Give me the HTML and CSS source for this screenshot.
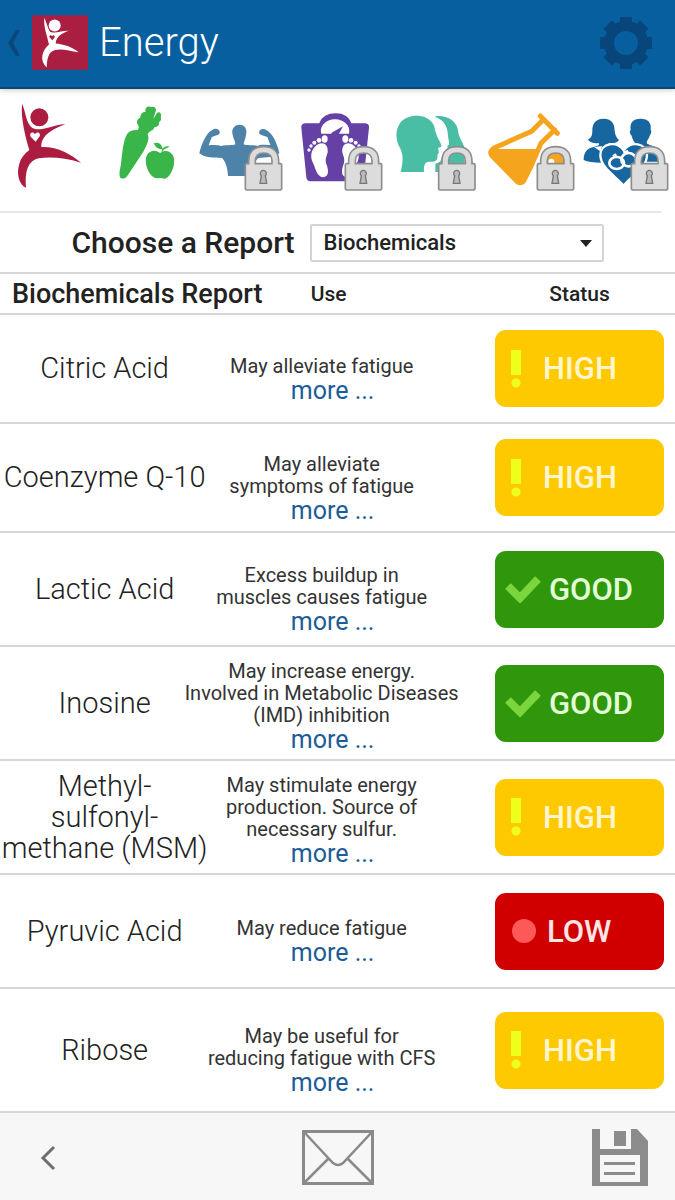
FILE: index.html
```html
<!DOCTYPE html>
<html lang="en">
<head>
	<meta charset="UTF-8">
	<meta name="viewport" content="width=device-width, initial-scale=1">
	<title>Energy</title>
	<link rel="stylesheet" href="styles.css">
</head>
<body>
	<header class="topbar">
		<a class="back" href="#" aria-label="Back">
			<svg width="14" height="28" viewBox="0 0 14 28"><path d="M9 1h4L6 14l7 13H9L1 14z" fill="#0a467a"/></svg>
		</a>
		<svg class="logo" width="56" height="55" viewBox="96 46 168 164">
			<path fill="#aa1e41" d="M96 46h168v164H96z"/>
			<circle cx="164" cy="77" r="18" fill="#fff"/>
			<path fill="#fff" d="M133 54C139 66 143 84 149 94C161 104 181 93 207 93C187 99 168 111 167 131C191 133 216 141 236 157C207 153 185 145 163 151C145 157 141 177 140 203C118 183 125 153 147 134C141 105 130 82 133 54z"/>
			<path fill="#aa1e41" d="M157 121l-8-8c-4-7 5-9 7-4c3-5 10-3 8 3z"/>
		</svg>
		<h1>Energy</h1>
		<button class="settings" type="button" aria-label="Settings">
			<svg width="54" height="54" viewBox="-27 -27 54 54">
				<g fill="#07457a">
					<path id="tooth" d="M-6-17V-25q0-1 1-1H5q1 0 1 1V-17z"/>
					<use href="#tooth" transform="rotate(45)"/>
					<use href="#tooth" transform="rotate(90)"/>
					<use href="#tooth" transform="rotate(135)"/>
					<use href="#tooth" transform="rotate(180)"/>
					<use href="#tooth" transform="rotate(225)"/>
					<use href="#tooth" transform="rotate(270)"/>
					<use href="#tooth" transform="rotate(315)"/>
				</g>
				<circle r="17" fill="none" stroke="#07457a" stroke-width="10"/>
			</svg>
		</button>
	</header>

	<svg class="defs" width="0" height="0">
		<defs>
			<g id="lock">
				<path d="M11 54V46C11 16 30 3 56 3s45 13 45 43v8h5q4 0 4 4v70q0 5-5 5H6q-5 0-5-5V58q0-4 4-4zM31 54h50V46C81 29 71 22 56 22S31 29 31 46z" fill="#dcdcdc" fill-rule="evenodd" stroke="#8d8d8d" stroke-width="5" stroke-linejoin="round"/>
				<path d="M49 90a9 9 0 1 1 12 0l4 23H45z" fill="#bbb" stroke="#777" stroke-width="4"/>
			</g>
		</defs>
	</svg>

	<nav class="tabs">
		<a href="#" aria-label="Wellness">
			<svg viewBox="0 15 288 288">
				<circle cx="118" cy="67" r="27" fill="#ab1c40"/>
				<path fill="#ab1c40" d="M66 26C76 45 78 86 97 99C120 111 151 92 196 87C160 102 123 119 124 156C172 154 213 178 243 203C195 188 151 185 116 190C84 198 74 227 78 278C56 268 49 235 58 206C65 184 77 174 88 165C76 126 62 70 66 26z"/>
				<path fill="#fff" d="M107 140L92 125C86 112 101 108 105 118C110 107 124 113 119 124z"/>
			</svg>
		</a>
		<a href="#" aria-label="Nutrition">
			<svg viewBox="291 15 288 288" fill="#39b54a">
				<path d="M382 116C396 98 433 104 443 118C450 133 440 152 430 170L382 243C376 251 366 253 361 248C356 240 360 222 363 208C367 174 369 136 382 116z"/>
				<path d="M412 108C418 99 417 94 413 88C408 80 413 70 421 68C421 52 432 50 437 51C432 36 447 31 454 36C464 32 472 42 466 52L460 72L469 57C475 45 488 56 482 67C486 73 481 79 477 82C479 90 473 96 463 97C459 111 448 104 442 120z"/>
				<path d="M480 174C498 160 519 171 522 191C526 214 511 243 498 250C490 253 485 248 479 249C466 253 457 245 451 238C435 216 431 181 450 171C461 164 472 168 480 174z"/>
				<path d="M461 145C475 139 486 148 488 163C475 164 467 157 461 145zM484 170C487 158 495 151 508 155C501 161 491 159 488 170z"/>
			</svg>
		</a>
		<a href="#" aria-label="Fitness">
			<svg viewBox="9 15 288 288">
				<path fill="#4d83a8" d="M148 89C165 89 172 102 168 119C167 132 161 139 161 148C170 153 188 148 203 153C214 147 226 151 241 150L232 126C223 122 213 121 208 116C204 102 221 98 229 105C247 114 262 145 268 175C251 187 229 188 205 189C188 205 187 223 186 243H114C113 222 109 203 96 189C73 188 45 189 28 175C35 145 49 113 67 105C77 97 94 104 88 117C83 122 73 121 65 127L56 151C71 149 83 149 94 153C109 148 126 153 136 148C136 137 129 129 128 119C123 104 133 89 148 89z"/>
				<use href="#lock" x="165" y="152"/>
			</svg>
		</a>
		<a href="#" aria-label="Weight">
			<svg viewBox="297 15 288 288">
				<path fill="#6540a5" d="M345 85H388C395 65 413 55 437 55S477 65 484 85H526Q538 86 537 98L521 248Q519 259 508 259H361Q350 258 349 247L334 98Q333 86 345 85z"/>
				<path fill="#fff" d="M394 116C387 89 414 72 437 73S483 91 477 116H447L459 94L430 110Q424 111 424 116z"/>
				<g id="foot" fill="#fff">
					<path d="M377 153C394 137 416 145 413 172C410 185 404 192 409 207C416 225 418 245 399 247C379 244 377 219 369 204C359 185 364 163 377 153z"/>
					<ellipse cx="404" cy="132" rx="9" ry="11"/>
					<circle cx="387" cy="136" r="7"/>
					<circle cx="373" cy="143" r="6"/>
					<circle cx="363" cy="153" r="5"/>
					<circle cx="357" cy="165" r="5"/>
				</g>
				<use href="#foot" transform="matrix(-1 0 0 1 870 0)"/>
				<use href="#lock" x="465" y="152"/>
			</svg>
		</a>
		<a href="#" aria-label="Mind">
			<svg viewBox="3 15 288 288">
				<g fill="#4abea5">
					<path d="M47 231C54 202 56 181 45 159C30 132 31 104 46 83C67 57 118 55 140 81C151 93 149 107 155 120C159 133 171 148 169 155L159 159L162 172L157 181C160 198 149 202 132 200C119 200 116 211 117 231z"/>
					<path d="M152 63C190 60 219 80 220 113C224 132 237 148 239 160V231H151V206C158 204 165 203 168 195L172 179C180 174 191 164 187 153L192 148C193 140 188 125 188 112C184 87 172 74 152 67z"/>
				</g>
				<use href="#lock" x="160" y="152"/>
			</svg>
		</a>
		<a href="#" aria-label="Lab">
			<svg viewBox="6 15 288 288">
				<path fill="none" stroke="#f5a51d" stroke-width="15" stroke-linejoin="round" stroke-linecap="round" d="M191 73L155 109L42 159Q26 169 36 182L110 258Q120 269 131 258L152 216L183 145L224 104M181 63L232 115"/>
				<path fill="#f5a51d" d="M30 162H178L137 258Q123 273 108 260L32 184Q23 174 30 162z"/>
				<path fill="#f5a51d" d="M188 200a39 38 0 0 1 78 0v8h-78z"/>
				<circle cx="214" cy="200" r="9" fill="#fff"/>
				<use href="#lock" x="171" y="152"/>
			</svg>
		</a>
		<a href="#" aria-label="Relationships">
			<svg viewBox="297 15 288 288">
				<g fill="#17669f">
					<path d="M371 71C397 71 404 88 404 107C405 119 409 128 417 135C411 145 397 145 386 145C383 150 385 154 388 158L364 174V203Q328 203 311 195C311 172 321 159 343 155C355 153 358 151 357 145C343 145 331 143 324 134C335 127 337 119 337 107C337 88 344 71 371 71z"/>
					<path d="M482 71C505 71 515 84 512 105C515 106 514 116 510 120C507 132 501 135 500 143C504 154 540 149 547 179V200H440V158C460 153 465 153 465 143C458 137 457 128 454 121C449 117 448 108 452 105C449 83 458 71 482 71z"/>
				</g>
				<path d="M431 272C404 241 363 219 361 181C362 143 410 137 431 166C453 137 499 142 501 181C500 219 458 239 431 272z" fill="#17669f" stroke="#fff" stroke-width="7"/>
				<path d="M342 156L361 169L366 153z" fill="#fff"/>
				<g fill="none" stroke="#fff" stroke-width="8">
					<ellipse cx="410" cy="204" rx="22" ry="18"/>
					<ellipse cx="446" cy="194" rx="22" ry="20"/>
					<path d="M399 184l10-6M430 173l15-5"/>
				</g>
				<use href="#lock" x="453" y="152"/>
			</svg>
		</a>
	</nav>

	<main>
		<form class="chooser">
			<label for="report">Choose a Report</label>
			<div class="select">
				<select id="report">
					<option>Biochemicals</option>
				</select>
			</div>
		</form>

		<table class="report">
			<colgroup>
				<col class="col-name">
				<col class="col-use">
				<col class="col-status">
			</colgroup>
			<thead>
				<tr>
					<th class="title" scope="col">Biochemicals Report</th>
					<th scope="col">Use</th>
					<th class="status" scope="col">Status</th>
				</tr>
			</thead>
			<tbody>
				<tr class="short">
					<td class="name">Citric Acid</td>
					<td class="use"><p>May alleviate fatigue</p><a href="#">more ...</a></td>
					<td class="status"><span class="badge high"><i></i>HIGH</span></td>
				</tr>
				<tr class="short">
					<td class="name">Coenzyme Q-10</td>
					<td class="use"><p>May alleviate<br>symptoms of fatigue</p><a href="#">more ...</a></td>
					<td class="status"><span class="badge high"><i></i>HIGH</span></td>
				</tr>
				<tr>
					<td class="name">Lactic Acid</td>
					<td class="use"><p>Excess buildup in<br>muscles causes fatigue</p><a href="#">more ...</a></td>
					<td class="status"><span class="badge good"><svg width="36" height="28" viewBox="0 0 36 28"><path d="M3 11l12 12L33 4" fill="none" stroke="#7ad63c" stroke-width="8"/></svg>GOOD</span></td>
				</tr>
				<tr class="long">
					<td class="name">Inosine</td>
					<td class="use"><p>May increase energy.<br>Involved in Metabolic Diseases<br>(IMD) inhibition</p><a href="#">more ...</a></td>
					<td class="status"><span class="badge good"><svg width="36" height="28" viewBox="0 0 36 28"><path d="M3 11l12 12L33 4" fill="none" stroke="#7ad63c" stroke-width="8"/></svg>GOOD</span></td>
				</tr>
				<tr class="long">
					<td class="name">Methyl-<br>sulfonyl-<br>methane (MSM)</td>
					<td class="use"><p>May stimulate energy<br>production. Source of<br>necessary sulfur.</p><a href="#">more ...</a></td>
					<td class="status"><span class="badge high"><i></i>HIGH</span></td>
				</tr>
				<tr>
					<td class="name">Pyruvic Acid</td>
					<td class="use"><p>May reduce fatigue</p><a href="#">more ...</a></td>
					<td class="status"><span class="badge low"><i></i>LOW</span></td>
				</tr>
				<tr class="last">
					<td class="name">Ribose</td>
					<td class="use"><p>May be useful for<br>reducing fatigue with CFS</p><a href="#">more ...</a></td>
					<td class="status"><span class="badge high"><i></i>HIGH</span></td>
				</tr>
			</tbody>
		</table>
	</main>

	<footer class="toolbar">
		<button class="prev" type="button" aria-label="Previous">
			<svg width="16" height="26" viewBox="0 0 16 26"><path d="M14 2L3 13l11 11" fill="none" stroke="#6e6e6e" stroke-width="3"/></svg>
		</button>
		<button type="button" aria-label="Send by mail">
			<svg width="72" height="55" viewBox="0 0 144 110" fill="none" stroke="#8a8a8a" stroke-width="6">
				<path d="M3 3h138v104H3z"/>
				<path d="M4 4l58 62q10 8 20 0L140 4M4 106l50-50M140 106L90 56" stroke-width="5"/>
			</svg>
		</button>
		<button class="save" type="button" aria-label="Save">
			<svg width="56" height="57" viewBox="0 0 56 57">
				<path fill="#8c8c8c" fill-rule="evenodd" d="M0 0h8v20h31V0h6l11 12v45H0zM8 26v27h40V26z"/>
				<path fill="#8c8c8c" d="M22 2h12v15H22zM12 33h31v3H12zM12 43h31v3H12z"/>
			</svg>
		</button>
	</footer>
</body>
</html>
```

FILE: styles.css
```css
*{
	margin: 0;
	padding: 0;
	box-sizing: border-box;
}
body{
	display: flex;
	flex-direction: column;
	min-height: 100vh;
	color: #222;
	background: #fff;
	font-family: Roboto, "Liberation Sans", sans-serif;
}
svg{
	display: block;
}
button{
	border: 0;
	background: none;
	cursor: pointer;
}
.defs{
	position: absolute;
}

/* top bar */
.topbar{
	display: flex;
	align-items: center;
	height: 89px;
	padding: 0 22px 2px 7px;
	background: #075f9f;
	border-bottom: 2px solid #08477b;
	box-shadow: 0 1px 5px rgba(80, 60, 40, .3);
}
.logo{
	margin: 0 11px;
}
.topbar h1{
	flex: 1;
	color: #fff;
	font-size: 40px;
	font-weight: 300;
	line-height: 48px;
}

/* category icons */
.tabs{
	display: grid;
	grid-template-columns: repeat(7, 1fr);
	justify-items: center;
	padding-top: 11px;
	height: 124px;
	background: linear-gradient(#e6e6e6, #e6e6e6) 0 100% / 98% 2px no-repeat;
}
.tabs svg{
	width: 96px;
	height: 96px;
}

/* report picker */
.chooser{
	display: flex;
	align-items: center;
	justify-content: center;
	gap: 15px;
	height: 59px;
}
.chooser label{
	font-size: 30px;
	font-weight: 500;
}
.select{
	position: relative;
	width: 294px;
}
.select select{
	width: 100%;
	height: 38px;
	padding-left: 12px;
	color: #222;
	font: 500 22px Roboto, "Liberation Sans", sans-serif;
	background: #fff;
	border: 2px solid #d4d4d4;
	border-radius: 2px;
	appearance: none;
}
.select::after{
	content: "";
	position: absolute;
	top: 16px;
	right: 12px;
	border: 6px solid transparent;
	border-top: 7px solid #222;
	border-bottom: 0;
	pointer-events: none;
}

/* report table */
.report{
	width: 100%;
	table-layout: fixed;
	border-spacing: 0;
	border-top: 2px solid #d6d6d6;
}
.col-name{
	width: 31%;
}
.col-status{
	width: 191px;
}
.report th,
.report td{
	border-bottom: 2px solid #d6d6d6;
	text-align: center;
}
.report th{
	height: 41px;
	padding-right: 36px;
	font-size: 21px;
	font-weight: 500;
}
.report th.title{
	padding: 0 0 0 12px;
	font-size: 27px;
	text-align: left;
	white-space: nowrap;
}
.report th.status{
	padding-right: 0;
}
.report td{
	height: 114px;
}
.report .short td{
	height: 109px;
}
.report .last td{
	height: 124px;
}
.name{
	font-size: 29px;
	font-weight: 300;
	line-height: 31px;
	white-space: nowrap;
}
.use{
	padding: 22px 50px 0 0;
	white-space: nowrap;
}
.long .use{
	padding-top: 8px;
}
.use p{
	margin: 0 -40px;
	color: #333;
	font-size: 20px;
	line-height: 22px;
}
.use a{
	display: block;
	padding-left: 22px;
	color: #1c5c98;
	font-size: 25px;
	line-height: 28px;
	text-decoration: none;
}
.badge{
	display: flex;
	align-items: center;
	height: 77px;
	margin: 0 11px;
	border-radius: 11px;
	font-size: 31px;
	font-weight: 500;
}
.high{
	gap: 22px;
	padding-left: 16px;
	color: #fff6d0;
	background: #ffc900;
}
.high i{
	width: 10px;
	height: 38px;
	background: radial-gradient(circle at 5px 33px, #eeff1c 4px, transparent 5px), linear-gradient(#eeff1c, #eeff1c) 0 0 / 10px 25px no-repeat;
}
.good{
	gap: 8px;
	padding-left: 10px;
	color: #e2ffd6;
	background: #30970c;
}
.low{
	gap: 11px;
	padding-left: 17px;
	color: #ffe6e6;
	background: #d00000;
}
.low i{
	width: 24px;
	height: 24px;
	border-radius: 50%;
	background: #ff5858;
}

/* bottom bar */
.toolbar{
	display: grid;
	grid-template-columns: 1fr auto 1fr;
	align-items: center;
	flex: 1;
	padding: 2px 27px 0;
	background: #f7f7f7;
}
.prev{
	justify-self: start;
	padding: 10px 13px;
}
.save{
	justify-self: end;
}
```
